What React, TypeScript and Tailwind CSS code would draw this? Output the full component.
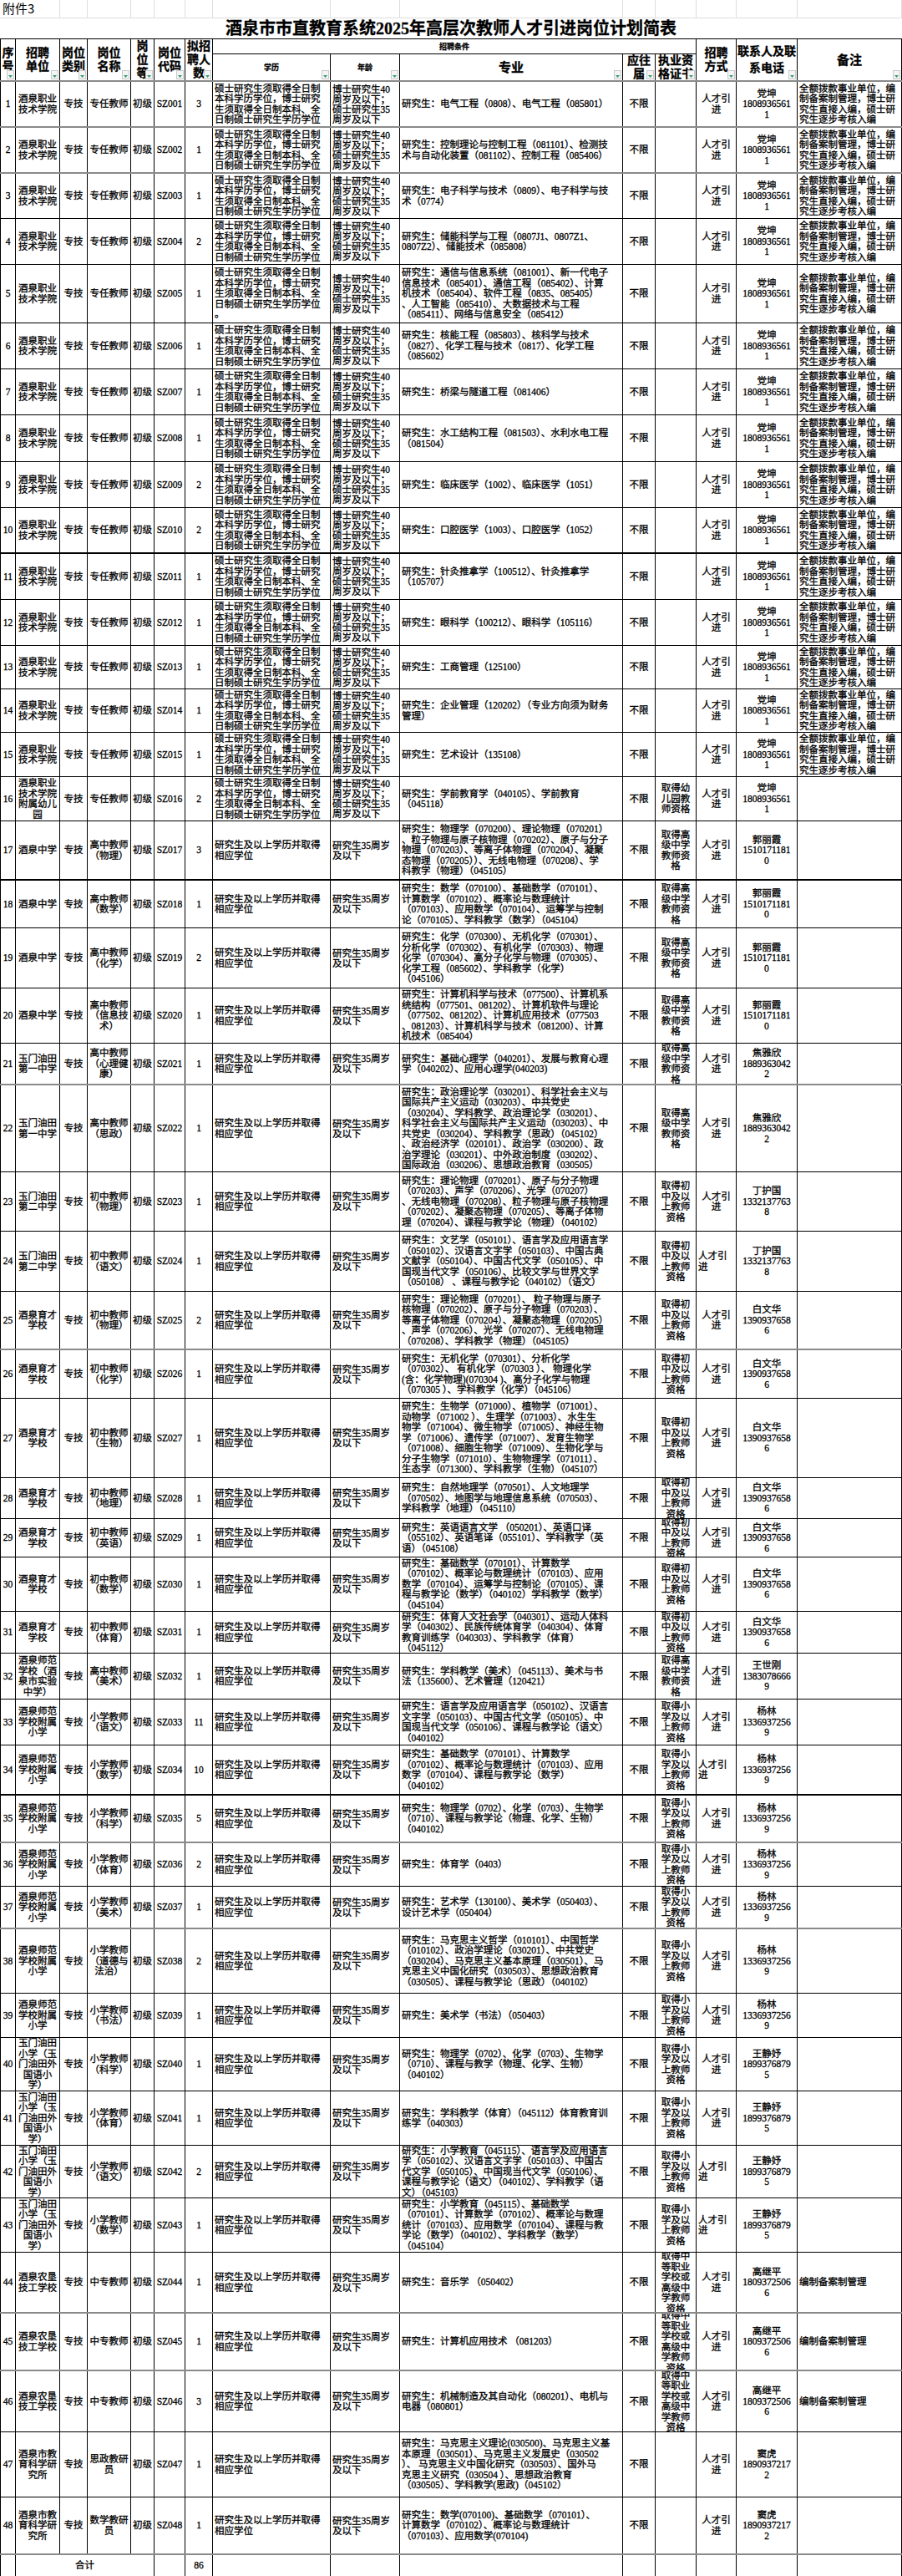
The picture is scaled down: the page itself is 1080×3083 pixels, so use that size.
import React from 'react';

const COLS =
  'grid grid-cols-[19px_53px_33px_52px_28px_37px_33px_141px_83px_267px_39px_49px_48px_73px_125px]';

const THIN = 'border-b border-black';
const GREY = 'border-b-2 border-[#8a8a8a]';
const DARK = 'border-b-2 border-black';

const VOC_UNIT = '酒泉职业\n技术学院';
const VOC_EDU = '硕士研究生须取得全日制\n本科学历学位，博士研究\n生须取得全日制本科、全\n日制硕士研究生学历学位';
const VOC_AGE = '博士研究生40\n周岁及以下；\n硕士研究生35\n周岁及以下';
const VOC_NOTE = '全额拨款事业单位，编\n制备案制管理，博士研\n究生直接入编，硕士研\n究生逐步考核入编';
const EDU = '研究生及以上学历并取得\n相应学位';
const AGE = '研究生35周岁\n及以下';
const HIGH = '取得高\n级中学\n教师资\n格';
const MID = '取得初\n中及以\n上教师\n资格';
const PRI = '取得小\n学及以\n上教师\n资格';
const VOCQ = '取得中\n等职业\n学校或\n高级中\n学教师\n资格';

const DK = '党坤\n1808936561\n1';
const GLX = '郭丽霞\n1510171181\n0';
const JYX = '焦雅欣\n1889363042\n2';
const DHG = '丁护国\n1332137763\n8';
const BWH = '白文华\n1390937658\n6';
const WSG = '王世刚\n1383078666\n9';
const YL = '杨林\n1336937256\n9';
const WJY = '王静妤\n1899376879\n5';
const GJP = '高继平\n1809372506\n6';
const DH = '窦虎\n1890937217\n2';

type Row = {
  no: number;
  unit: string;
  name: string;
  count: string;
  edu: string;
  age: string;
  major: string;
  qual: string;
  contact: string;
  note: string;
  h: string;
  line: string;
  ml?: boolean;
};

const voc = (
  no: number,
  count: string,
  major: string,
  h: string,
  line: string = THIN,
  edu: string = VOC_EDU
): Row => ({
  no,
  unit: VOC_UNIT,
  name: '专任教师',
  count,
  edu,
  age: VOC_AGE,
  major,
  qual: '',
  contact: DK,
  note: VOC_NOTE,
  h,
  line,
});

const std = (
  no: number,
  unit: string,
  name: string,
  count: string,
  major: string,
  qual: string,
  contact: string,
  h: string,
  line: string = THIN,
  ml?: boolean,
  note: string = ''
): Row => ({ no, unit, name, count, edu: EDU, age: AGE, major, qual, contact, note, h, line, ml });

const rows: Row[] = [
  voc(1, '3', '研究生：电气工程（0808）、电气工程（085801）', 'h-[55px]', GREY),
  voc(2, '1', '研究生：控制理论与控制工程（081101）、检测技\n术与自动化装置（081102）、控制工程（085406）', 'h-[55px]', GREY),
  voc(3, '1', '研究生：电子科学与技术（0809）、电子科学与技\n术（0774）', 'h-[54px]'),
  voc(4, '2', '研究生：储能科学与工程（0807J1、0807Z1、\n0807Z2）、储能技术（085808）', 'h-[55px]'),
  voc(
    5,
    '1',
    '研究生：通信与信息系统（081001）、新一代电子\n信息技术（085401）、通信工程（085402）、计算\n机技术（085404）、软件工程（0835、085405）\n、人工智能（085410）、大数据技术与工程\n（085411）、网络与信息安全（085412）',
    'h-[70px]',
    THIN,
    VOC_EDU + '\n。'
  ),
  voc(6, '1', '研究生：核能工程（085803）、核科学与技术\n（0827）、化学工程与技术（0817）、化学工程\n（085602）', 'h-[55px]'),
  voc(7, '1', '研究生：桥梁与隧道工程（081406）', 'h-[55px]'),
  voc(8, '1', '研究生：水工结构工程（081503）、水利水电工程\n（081504）', 'h-[56px]'),
  voc(9, '2', '研究生：临床医学（1002）、临床医学（1051）', 'h-[55px]'),
  voc(10, '2', '研究生：口腔医学（1003）、口腔医学（1052）', 'h-[55px]', DARK),
  voc(11, '1', '研究生：针灸推拿学（100512）、针灸推拿学\n（105707）', 'h-[55px]'),
  voc(12, '1', '研究生：眼科学（100212）、眼科学（105116）', 'h-[55px]'),
  voc(13, '1', '研究生：工商管理（125100）', 'h-[52px]'),
  voc(14, '1', '研究生：企业管理（120202）（专业方向须为财务\n管理）', 'h-[52px]'),
  voc(15, '1', '研究生：艺术设计（135108）', 'h-[53px]'),
  {
    ...voc(16, '2', '研究生：学前教育学（040105）、学前教育\n（045118）', 'h-[53px]'),
    unit: '酒泉职业\n技术学院\n附属幼儿\n园',
    qual: '取得幼\n儿园教\n师资格',
    note: '',
  },
  std(
    17,
    '酒泉中学',
    '高中教师\n（物理）',
    '3',
    '研究生：物理学（070200）、理论物理（070201）\n、粒子物理与原子核物理（070202）、原子与分子\n物理（070203）、等离子体物理（070204）、凝聚\n态物理（070205））、无线电物理（070208）、学\n科教学（物理）（045105）',
    HIGH,
    GLX,
    'h-[71px]',
    DARK
  ),
  std(
    18,
    '酒泉中学',
    '高中教师\n（数学）',
    '1',
    '研究生：数学（070100）、基础数学（070101）、\n计算数学（070102）、概率论与数理统计\n（070103）、应用数学（070104）、运筹学与控制\n论（070105）、学科教学（数学）（045104）',
    HIGH,
    GLX,
    'h-[57px]'
  ),
  std(
    19,
    '酒泉中学',
    '高中教师\n（化学）',
    '2',
    '研究生：化学（070300）、无机化学（070301）、\n分析化学（070302）、有机化学（070303）、物理\n化学（070304）、高分子化学与物理（070305）、\n化学工程（085602）、学科教学（化学）\n（045106）',
    HIGH,
    GLX,
    'h-[72px]'
  ),
  std(
    20,
    '酒泉中学',
    '高中教师\n（信息技\n术）',
    '1',
    '研究生：计算机科学与技术（077500）、计算机系\n统结构（077501、081202）、计算机软件与理论\n（077502、081202）、计算机应用技术（077503\n、081203）、计算机科学与技术（081200）、计算\n机技术（085404）',
    HIGH,
    GLX,
    'h-[66px]'
  ),
  std(
    21,
    '玉门油田\n第一中学',
    '高中教师\n（心理健\n康）',
    '1',
    '研究生：基础心理学（040201）、发展与教育心理\n学（040202）、应用心理学(040203)',
    HIGH,
    JYX,
    'h-[50px]',
    GREY
  ),
  std(
    22,
    '玉门油田\n第一中学',
    '高中教师\n（思政）',
    '1',
    '研究生：政治理论学（030201）、科学社会主义与\n国际共产主义运动（030203）、中共党史\n（030204）、学科教学、政治理论学（030201）、\n科学社会主义与国际共产主义运动（030203）、中\n共党史（030204）、学科教学（思政）（045102）\n、政治经济学（020101）、政治学（030200）、政\n治学理论（030201）、中外政治制度（030202）、\n国际政治（030206）、思想政治教育（030505）',
    HIGH,
    JYX,
    'h-[104px]'
  ),
  std(
    23,
    '玉门油田\n第二中学',
    '初中教师\n（物理）',
    '1',
    '研究生：理论物理（070201）、原子与分子物理\n（070203）、声学（070206）、光学（070207）\n、无线电物理（070208）、粒子物理与原子核物理\n（070202）、凝聚态物理（070205）、等离子体物\n理（070204）、课程与教学论（物理）（040102）',
    MID,
    DHG,
    'h-[71px]'
  ),
  std(
    24,
    '玉门油田\n第二中学',
    '初中教师\n（语文）',
    '1',
    '研究生：文艺学（050101）、语言学及应用语言学\n（050102）、汉语言文字学（050103）、中国古典\n文献学（050104）、中国古代文学（050105）、中\n国现当代文学（050106）、比较文学与世界文学\n（050108） 、课程与教学论（040102）（语文）',
    MID,
    DHG,
    'h-[72px]',
    THIN,
    true
  ),
  std(
    25,
    '酒泉育才\n学校',
    '初中教师\n（物理）',
    '2',
    '研究生：理论物理（070201）、 粒子物理与原子\n核物理（070202）、原子与分子物理（070203）、\n等离子体物理（070204）、凝聚态物理（070205）\n、声学（070206）、光学（070207）、无线电物理\n（070208）、学科教学（物理）（045105）',
    MID,
    BWH,
    'h-[70px]',
    GREY
  ),
  std(
    26,
    '酒泉育才\n学校',
    '初中教师\n（化学）',
    '1',
    '研究生：无机化学（070301）、分析化学\n（070302）、 有机化学（070303 ）、 物理化学\n(含：化学物理)(070304 )、高分子化学与物理\n（070305 ）、学科教学（化学）（045106）',
    MID,
    BWH,
    'h-[58px]'
  ),
  std(
    27,
    '酒泉育才\n学校',
    '初中教师\n（生物）',
    '1',
    '研究生：生物学（071000）、植物学（071001）、\n动物学（071002 ）、生理学（071003）、水生生\n物学（071004）、微生物学（071005）、神经生物\n学（071006）、遗传学（071007）、发育生物学\n（071008）、细胞生物学（071009）、生物化学与\n分子生物学（071010）、生物物理学（071011）、\n生态学（071300）、学科教学（生物）（045107）',
    MID,
    BWH,
    'h-[95px]'
  ),
  std(
    28,
    '酒泉育才\n学校',
    '初中教师\n（地理）',
    '1',
    '研究生：自然地理学（070501）、人文地理学\n（070502）、地图学与地理信息系统（070503）、\n学科教学（地理）（045110）',
    MID,
    BWH,
    'h-[49px]'
  ),
  std(
    29,
    '酒泉育才\n学校',
    '初中教师\n（英语）',
    '1',
    '研究生：英语语言文学 （050201）、英语口译\n（055102）、英语笔译（055101）、学科教学（英\n语）（045108）',
    MID,
    BWH,
    'h-[46px]'
  ),
  std(
    30,
    '酒泉育才\n学校',
    '初中教师\n（数学）',
    '1',
    '研究生：基础数学（070101）、计算数学\n（070102）、概率论与数理统计（070103）、应用\n数学（070104）、运筹学与控制论（070105）、课\n程与教学论（数学）（040102）学科教学（数学）\n（045104）',
    MID,
    BWH,
    'h-[65px]'
  ),
  std(
    31,
    '酒泉育才\n学校',
    '初中教师\n（体育）',
    '1',
    '研究生：体育人文社会学（040301）、运动人体科\n学（040302）、民族传统体育学（040304）、体育\n教育训练学（040303）、学科教学（体育）\n（045112）',
    MID,
    BWH,
    'h-[50px]'
  ),
  std(
    32,
    '酒泉师范\n学校（酒\n泉市实验\n中学）',
    '高中教师\n（美术）',
    '1',
    '研究生：学科教学（美术）（045113）、美术与书\n法（135600）、艺术管理（120421）',
    HIGH,
    WSG,
    'h-[55px]'
  ),
  std(
    33,
    '酒泉师范\n学校附属\n小学',
    '小学教师\n（语文）',
    '11',
    '研究生：语言学及应用语言学（050102）、汉语言\n文字学（050103）、中国古代文学（050105）、中\n国现当代文学（050106）、课程与教学论（语文）\n（040102）',
    PRI,
    YL,
    'h-[55px]'
  ),
  std(
    34,
    '酒泉师范\n学校附属\n小学',
    '小学教师\n（数学）',
    '10',
    '研究生：基础数学（070101）、计算数学\n（070102）、概率论与数理统计（070103）、应用\n数学（070104）、课程与教学论（数学）\n（040102）',
    PRI,
    YL,
    'h-[60px]',
    DARK,
    true
  ),
  std(
    35,
    '酒泉师范\n学校附属\n小学',
    '小学教师\n（科学）',
    '5',
    '研究生：物理学（0702）、化学（0703）、生物学\n（0710）、课程与教学论（物理、化学、生物）\n（040102）',
    PRI,
    YL,
    'h-[57px]',
    GREY
  ),
  std(36, '酒泉师范\n学校附属\n小学', '小学教师\n（体育）', '2', '研究生：体育学（0403）', PRI, YL, 'h-[52px]'),
  std(
    37,
    '酒泉师范\n学校附属\n小学',
    '小学教师\n（美术）',
    '1',
    '研究生：艺术学（130100）、美术学（050403）、\n设计艺术学（050404）',
    PRI,
    YL,
    'h-[51px]',
    GREY
  ),
  std(
    38,
    '酒泉师范\n学校附属\n小学',
    '小学教师\n（道德与\n法治）',
    '2',
    '研究生：马克思主义哲学（010101）、中国哲学\n（010102）、政治学理论（030201）、中共党史\n（030204）、马克思主义基本原理（030501）、马\n克思主义中国化研究（030503）、思想政治教育\n（030505）、课程与教学论（思政）（040102）',
    PRI,
    YL,
    'h-[77px]'
  ),
  std(39, '酒泉师范\n学校附属\n小学', '小学教师\n（书法）', '1', '研究生：美术学（书法）（050403）', PRI, YL, 'h-[53px]'),
  std(
    40,
    '玉门油田\n小学（玉\n门油田外\n国语小\n学）',
    '小学教师\n（科学）',
    '1',
    '研究生：物理学（0702）、化学（0703）、生物学\n（0710）、课程与教学（物理、化学、生物）\n（040102）',
    PRI,
    WJY,
    'h-[64px]'
  ),
  std(
    41,
    '玉门油田\n小学（玉\n门油田外\n国语小\n学）',
    '小学教师\n（体育）',
    '1',
    '研究生：学科教学（体育）（045112）体育教育训\n练学（040303）',
    PRI,
    WJY,
    'h-[65px]'
  ),
  std(
    42,
    '玉门油田\n小学（玉\n门油田外\n国语小\n学）',
    '小学教师\n（语文）',
    '2',
    '研究生：小学教育（045115）、语言学及应用语言\n学（050102）、汉语言文字学（050103）、中国古\n代文学（050105）、中国现当代文学（050106）、\n课程与教学论（语文）（040102）、学科教学（语\n文）（045103）',
    PRI,
    WJY,
    'h-[63px]',
    THIN,
    true
  ),
  std(
    43,
    '玉门油田\n小学（玉\n门油田外\n国语小\n学）',
    '小学教师\n（数学）',
    '1',
    '研究生：小学教育（045115）、基础数学\n（070101）、计算数学（070102）、概率论与数理\n统计（070103）、应用数学（070104）、课程与教\n学论（数学）（040102）、学科教学（数学）\n（045104）',
    PRI,
    WJY,
    'h-[65px]',
    THIN,
    true
  ),
  std(44, '酒泉农垦\n技工学校', '中专教师', '1', '研究生：音乐学 （050402）', VOCQ, GJP, 'h-[73px]', GREY, false, '编制备案制管理'),
  std(45, '酒泉农垦\n技工学校', '中专教师', '1', '研究生：计算机应用技术 （081203）', VOCQ, GJP, 'h-[69px]', GREY, false, '编制备案制管理'),
  std(
    46,
    '酒泉农垦\n技工学校',
    '中专教师',
    '3',
    '研究生：机械制造及其自动化（080201）、电机与\n电器（080801）',
    VOCQ,
    GJP,
    'h-[73px]',
    THIN,
    false,
    '编制备案制管理'
  ),
  std(
    47,
    '酒泉市教\n育科学研\n究所',
    '思政教研\n员',
    '1',
    '研究生：马克思主义理论(030500)、马克思主义基\n本原理（030501）、马克思主义发展史（030502\n）、 马克思主义中国化研究（030503）、国外马\n克思主义研究（030504 ）、思想政治教育\n（030505）、学科教学(思政)（045102）',
    '',
    DH,
    'h-[78px]'
  ),
  std(
    48,
    '酒泉市教\n育科学研\n究所',
    '数学教研\n员',
    '1',
    '研究生：数学(070100)、基础数学（070101）、\n计算数学（070102）、概率论与数理统计\n（070103）、应用数学(070104)',
    '',
    DH,
    'h-[69px]',
    GREY
  ),
];

function Cell({
  children,
  left,
  open,
  className = '',
}: {
  children?: React.ReactNode;
  left?: boolean;
  open?: boolean;
  className?: string;
}) {
  return (
    <div
      className={`flex items-center whitespace-pre-line border-r border-black px-[2px] ${
        open ? 'overflow-visible' : 'overflow-hidden'
      } ${left ? 'justify-start text-left' : 'justify-center text-center'} ${className}`}
    >
      {children}
    </div>
  );
}

function Filter() {
  return (
    <span className="absolute bottom-[1px] right-[1px] flex h-[11px] w-[9px] items-end justify-center border border-[#c9c9c9] bg-[#f4f4f4] pb-[1px]">
      <svg width="5" height="3" viewBox="0 0 5 3">
        <path d="M0 0 L5 0 L2.5 3 Z" fill="#2e9e6a" />
      </svg>
    </span>
  );
}

function HCell({ children, className = '' }: { children?: React.ReactNode; className?: string }) {
  return (
    <div
      className={`relative flex items-center justify-center overflow-hidden whitespace-pre-line border-r border-black text-center ${className}`}
    >
      {children}
      <Filter />
    </div>
  );
}

export default function App() {
  return (
    <div className="w-[1080px] bg-white text-black font-['Liberation_Serif','Noto_Sans_CJK_SC',serif] text-[11.5px] leading-[12.5px] [-webkit-text-stroke:0.3px_black]">
      <div className={`${COLS} h-[22px] border-b border-[#dedede]`}>
        <div className="col-span-2 flex items-center border-r border-[#dedede] pl-[3px] font-['Noto_Sans_CJK_SC',sans-serif] text-[15px] [-webkit-text-stroke:0px_black]">
          附件3
        </div>
        {Array.from({ length: 13 }).map((_, i) => (
          <div key={i} className="border-r border-[#dedede]" />
        ))}
      </div>

      <div className="flex h-[25px] items-center justify-center border-b border-black text-[20px] font-bold leading-[22px]">
        酒泉市市直教育系统2025年高层次教师人才引进岗位计划简表
      </div>

      <div className={`${COLS} grid-rows-[18px_31px] border-b-2 border-[#8a8a8a] text-[14px] font-bold leading-[16px]`}>
        <HCell className="col-start-1 row-start-1 row-span-2 border-l">{'序\n号'}</HCell>
        <HCell className="col-start-2 row-start-1 row-span-2">{'招聘\n单位'}</HCell>
        <HCell className="col-start-3 row-start-1 row-span-2">{'岗位\n类别'}</HCell>
        <HCell className="col-start-4 row-start-1 row-span-2">{'岗位\n名称'}</HCell>
        <HCell className="col-start-5 row-start-1 row-span-2">{'岗\n位\n等'}</HCell>
        <HCell className="col-start-6 row-start-1 row-span-2">{'岗位\n代码'}</HCell>
        <HCell className="col-start-7 row-start-1 row-span-2">{'拟招\n聘人\n数'}</HCell>
        <div className="col-start-8 col-span-5 row-start-1 flex items-center justify-center border-r border-b border-black text-[9px]">
          招聘条件
        </div>
        <HCell className="col-start-8 row-start-2 text-[9px]">学历</HCell>
        <HCell className="col-start-9 row-start-2 text-[9px]">年龄</HCell>
        <HCell className="col-start-10 row-start-2 text-[15px]">专业</HCell>
        <HCell className="col-start-11 row-start-2">{'应往\n届'}</HCell>
        <HCell className="col-start-12 row-start-2 items-start pt-0">{'执业资\n格证书'}</HCell>
        <HCell className="col-start-13 row-start-1 row-span-2">{'招聘\n方式'}</HCell>
        <HCell className="col-start-14 row-start-1 row-span-2 leading-[20px]">{'联系人及联\n系电话'}</HCell>
        <HCell className="col-start-15 row-start-1 row-span-2 text-[15px]">备注</HCell>
      </div>

      {rows.map((r) => (
        <div key={r.no} className={`${COLS} grid-rows-1 ${r.h} ${r.line}`}>
          <Cell className="border-l px-0">{r.no}</Cell>
          <Cell>{r.unit}</Cell>
          <Cell>专技</Cell>
          <Cell>{r.name}</Cell>
          <Cell>初级</Cell>
          <Cell className="px-0">{'SZ0' + String(r.no).padStart(2, '0')}</Cell>
          <Cell>{r.count}</Cell>
          <Cell left>{r.edu}</Cell>
          <Cell left open className="leading-[12px]">
            {r.age}
          </Cell>
          <Cell left>{r.major}</Cell>
          <Cell>不限</Cell>
          <Cell>{r.qual}</Cell>
          <Cell left={r.ml}>{'人才引\n进'}</Cell>
          <Cell>{r.contact}</Cell>
          <Cell left>{r.note}</Cell>
        </div>
      ))}

      <div className={`${COLS} grid-rows-1 h-[26px] border-b border-black`}>
        <Cell className="border-l" />
        <Cell className="col-span-4">合计</Cell>
        <Cell />
        <Cell>86</Cell>
        <Cell />
        <Cell />
        <Cell />
        <Cell />
        <Cell />
        <Cell />
        <Cell />
        <Cell />
      </div>
    </div>
  );
}
